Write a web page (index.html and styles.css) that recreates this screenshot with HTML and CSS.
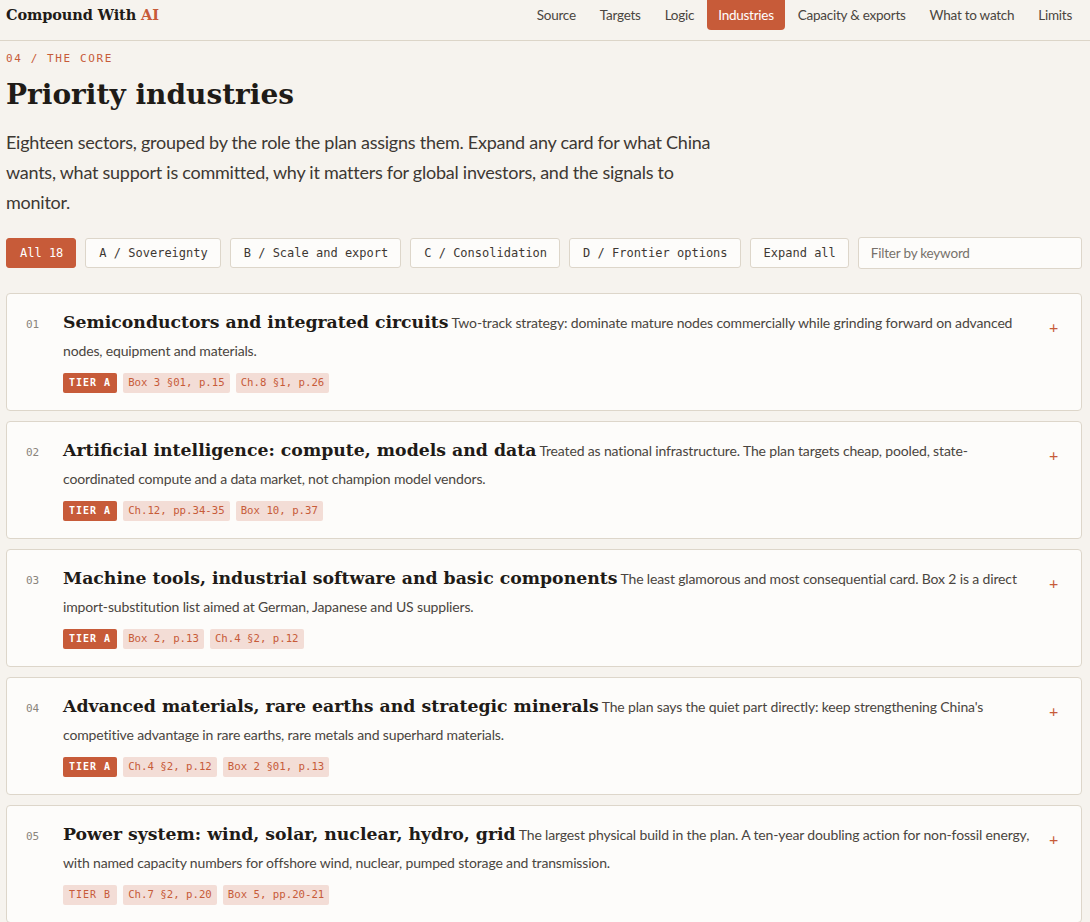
FILE: index.html
```html
<!DOCTYPE html>
<html lang="en">
<head>
    <meta charset="UTF-8">
    <meta name="viewport" content="width=device-width, initial-scale=1.0">
    <title>Priority industries | Compound With AI</title>
    <link rel="stylesheet" href="styles.css">
</head>
<body>
    <header class="topbar">
        <div class="brand">Compound With <span>AI</span></div>
        <nav class="nav">
            <a href="#source">Source</a>
            <a href="#targets">Targets</a>
            <a href="#logic">Logic</a>
            <a href="#industries" class="active">Industries</a>
            <a href="#capacity">Capacity &amp; exports</a>
            <a href="#watch">What to watch</a>
            <a href="#limits">Limits</a>
        </nav>
    </header>

    <main class="page" id="industries">
        <div class="eyebrow">04 / The core</div>
        <h1>Priority industries</h1>
        <p class="lede">Eighteen sectors, grouped by the role the plan assigns them. Expand any card for what China wants, what support is committed, why it matters for global investors, and the signals to monitor.</p>

        <div class="filters">
            <button class="chip on">All 18</button>
            <button class="chip">A / Sovereignty</button>
            <button class="chip">B / Scale and export</button>
            <button class="chip">C / Consolidation</button>
            <button class="chip">D / Frontier options</button>
            <button class="chip">Expand all</button>
            <input type="text" class="search" placeholder="Filter by keyword">
        </div>

        <div class="cards">
            <div class="card">
                <div class="num">01</div>
                <div class="body">
                    <p class="text"><strong>Semiconductors and integrated circuits</strong> Two-track strategy: dominate mature nodes commercially while grinding forward on advanced nodes, equipment and materials.</p>
                    <div class="tags">
                        <span class="tier">Tier A</span>
                        <span class="ref">Box 3 §01, p.15</span>
                        <span class="ref">Ch.8 §1, p.26</span>
                    </div>
                </div>
                <div class="toggle">+</div>
            </div>

            <div class="card">
                <div class="num">02</div>
                <div class="body">
                    <p class="text"><strong>Artificial intelligence: compute, models and data</strong> Treated as national infrastructure. The plan targets cheap, pooled, state-coordinated compute and a data market, not champion model vendors.</p>
                    <div class="tags">
                        <span class="tier">Tier A</span>
                        <span class="ref">Ch.12, pp.34-35</span>
                        <span class="ref">Box 10, p.37</span>
                    </div>
                </div>
                <div class="toggle">+</div>
            </div>

            <div class="card">
                <div class="num">03</div>
                <div class="body">
                    <p class="text"><strong>Machine tools, industrial software and basic components</strong> The least glamorous and most consequential card. Box 2 is a direct import-substitution list aimed at German, Japanese and US suppliers.</p>
                    <div class="tags">
                        <span class="tier">Tier A</span>
                        <span class="ref">Box 2, p.13</span>
                        <span class="ref">Ch.4 §2, p.12</span>
                    </div>
                </div>
                <div class="toggle">+</div>
            </div>

            <div class="card">
                <div class="num">04</div>
                <div class="body">
                    <p class="text"><strong>Advanced materials, rare earths and strategic minerals</strong> The plan says the quiet part directly: keep strengthening China's competitive advantage in rare earths, rare metals and superhard materials.</p>
                    <div class="tags">
                        <span class="tier">Tier A</span>
                        <span class="ref">Ch.4 §2, p.12</span>
                        <span class="ref">Box 2 §01, p.13</span>
                    </div>
                </div>
                <div class="toggle">+</div>
            </div>

            <div class="card">
                <div class="num">05</div>
                <div class="body">
                    <p class="text"><strong>Power system: wind, solar, nuclear, hydro, grid</strong> The largest physical build in the plan. A ten-year doubling action for non-fossil energy, with named capacity numbers for offshore wind, nuclear, pumped storage and transmission.</p>
                    <div class="tags">
                        <span class="tier soft">Tier B</span>
                        <span class="ref">Ch.7 §2, p.20</span>
                        <span class="ref">Box 5, pp.20-21</span>
                    </div>
                </div>
                <div class="toggle">+</div>
            </div>
        </div>
    </main>
</body>
</html>
```

FILE: styles.css
```css
body {
    margin: 0;
    background: #f6f3ee;
    color: #1f1b17;
    font-family: Lato, "Noto Sans", sans-serif;
}

/* top bar */
.topbar {
    display: flex;
    justify-content: space-between;
    align-items: flex-start;
    height: 40px;
    padding: 0 7px 0 6px;
    border-bottom: 1px solid #dcd5c8;
}
.brand {
    font-family: "DejaVu Serif", serif;
    font-weight: bold;
    font-size: 14.5px;
    line-height: 30px;
    letter-spacing: -0.1px;
}
.brand span {
    color: #c75b39;
}
.nav {
    display: flex;
    gap: 2px;
}
.nav a {
    padding: 0 11px;
    line-height: 30px;
    font-size: 13.5px;
    letter-spacing: -0.25px;
    color: #4a4540;
    text-decoration: none;
    border-radius: 0 0 4px 4px;
}
.nav a.active {
    background: #c75b39;
    color: #fff;
}

/* heading block */
.page {
    padding: 0 8px 0 6px;
}
.eyebrow {
    margin-top: 11px;
    font-family: "DejaVu Sans Mono", monospace;
    font-size: 11px;
    letter-spacing: 1.6px;
    text-transform: uppercase;
    color: #c75b39;
}
h1 {
    margin: 12px 0 0;
    font-family: "DejaVu Serif", serif;
    font-size: 28px;
    line-height: 36px;
}
.lede {
    margin: 14px 0 0;
    max-width: 720px;
    font-size: 18px;
    line-height: 30px;
    letter-spacing: -0.25px;
    color: #3d3833;
}

/* filters */
.filters {
    display: flex;
    gap: 9px;
    margin-top: 21px;
}
.chip {
    height: 30px;
    padding: 0 12px 0 13px;
    border: 1px solid #ddd6ca;
    border-radius: 3px;
    background: #fdfcfa;
    font-family: "DejaVu Sans Mono", monospace;
    font-size: 12px;
    color: #3d3833;
}
.chip.on {
    background: #c75b39;
    border-color: #c75b39;
    color: #fff;
}
.search {
    flex: 1;
    height: 32px;
    margin-top: -1px;
    padding: 0 12px;
    box-sizing: border-box;
    border: 1px solid #ddd6ca;
    border-radius: 3px;
    background: #fdfcfa;
    font-family: Lato, sans-serif;
    font-size: 13.5px;
    letter-spacing: -0.2px;
}
.search::placeholder {
    color: #77716a;
}

/* cards */
.cards {
    display: flex;
    flex-direction: column;
    gap: 10px;
    margin-top: 24px;
}
.card {
    display: grid;
    grid-template-columns: 37px 1fr 46px;
    padding: 15px 0 17px 19px;
    background: #fdfcfa;
    border: 1px solid #ddd6ca;
    border-radius: 4px;
}
.num {
    padding-top: 9px;
    font-family: "DejaVu Sans Mono", monospace;
    font-size: 11px;
    color: #8a847c;
}
.text {
    margin: 0;
    font-size: 14px;
    line-height: 28px;
    letter-spacing: -0.15px;
    color: #4a4540;
}
.text strong {
    font-family: "DejaVu Serif", serif;
    font-size: 17.3px;
    line-height: 20px;
    letter-spacing: 0;
    color: #1f1b17;
}
.tags {
    display: flex;
    gap: 6px;
    height: 20px;
    margin-top: 8px;
}
.tags span {
    padding: 0 5px;
    line-height: 20px;
    border-radius: 2px;
    font-family: "DejaVu Sans Mono", monospace;
    font-size: 10.7px;
}
.tier {
    background: #c75b39;
    color: #fff;
    font-weight: bold;
    font-size: 10px !important;
    letter-spacing: 1px;
    text-transform: uppercase;
    padding: 0 6px !important;
}
.tier.soft {
    background: #f3ddd6;
    color: #c75b39;
    font-weight: normal;
}
.ref {
    background: #f3ddd6;
    color: #c75b39;
}
.toggle {
    padding: 8px 0 0 14px;
    font-size: 16px;
    color: #c75b39;
}
```
